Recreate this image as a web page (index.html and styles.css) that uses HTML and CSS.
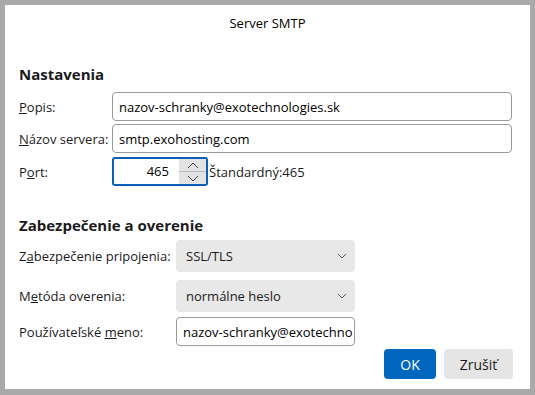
FILE: index.html
```html
<!DOCTYPE html>
<html lang="sk">
<head>
<meta charset="utf-8">
<title>Server SMTP</title>
<link rel="stylesheet" href="styles.css">
</head>
<body>
<div class="dialog">
  <div class="title">Server SMTP</div>

  <div class="heading h1">Nastavenia</div>
  <div class="grid1">
    <label class="lbl"><u>P</u>opis:</label>
    <div class="field">nazov-schranky@exotechnologies.sk</div>
    <label class="lbl"><u>N</u>ázov servera:</label>
    <div class="field">smtp.exohosting.com</div>
    <label class="lbl">P<u>o</u>rt:</label>
    <div class="portrow">
      <div class="port">
        <span class="portval">465</span>
        <div class="spin">
          <div class="spinbtn"><svg width="12" height="7" viewBox="0 0 12 7"><path d="M1 6 L6 1 L11 6" fill="none" stroke="#444" stroke-width="1"/></svg></div>
          <div class="spinbtn"><svg width="12" height="7" viewBox="0 0 12 7"><path d="M1 1 L6 6 L11 1" fill="none" stroke="#444" stroke-width="1"/></svg></div>
        </div>
      </div>
      <span class="std">Štandardný:465</span>
    </div>
  </div>

  <div class="heading h2">Zabezpečenie a overenie</div>
  <div class="grid2">
    <label class="lbl">Z<u>a</u>bezpečenie pripojenia:</label>
    <div class="select"><span>SSL/TLS</span><svg width="10" height="6" viewBox="0 0 10 6"><path d="M1 1 L5 5 L9 1" fill="none" stroke="#555" stroke-width="1"/></svg></div>
    <label class="lbl">M<u>e</u>tóda overenia:</label>
    <div class="select s2"><span>normálne heslo</span><svg width="10" height="6" viewBox="0 0 10 6"><path d="M1 1 L5 5 L9 1" fill="none" stroke="#555" stroke-width="1"/></svg></div>
    <label class="lbl">Používateľské <u>m</u>eno:</label>
    <div class="field user"><span class="clip">nazov-schranky@exotechno</span></div>
  </div>

  <div class="buttons">
    <div class="btn ok">OK</div>
    <div class="btn cancel">Zrušiť</div>
  </div>
</div>
</body>
</html>
```
FILE: styles.css
```css
html, body {
  margin: 0;
  padding: 0;
}
body {
  background: #a9a9a9;
  width: 535px;
  height: 395px;
  overflow: hidden;
  font-family: "Open Sans", "Noto Sans", sans-serif;
  font-size: 13px;
  color: #1b1b1b;
}
.dialog {
  margin: 5px;
  width: 525px;
  height: 384px;
  background: #fff;
  box-sizing: border-box;
  padding: 0 18px 0 14px;
  display: flex;
  flex-direction: column;
}
.title {
  margin-top: 9px;
  line-height: 18px;
  text-align: center;
  color: #000;
  padding-left: 4px;
}
.heading {
  font-weight: 700;
  font-size: 15px;
  line-height: 20px;
  color: #1b1b1b;
}
.h1 { margin-top: 32px; }
.h2 { margin-top: 29px; }
.grid1 {
  margin-top: 8px;
  display: grid;
  grid-template-columns: 93px 1fr;
  row-gap: 3px;
  align-items: center;
}
.grid1 .lbl:nth-of-type(3) { margin-top: 1px; }
.field {
  height: 29px;
  box-sizing: border-box;
  border: 1px solid #9a9a9a;
  border-radius: 4px;
  padding: 0 6px;
  display: flex;
  align-items: center;
  white-space: nowrap;
  overflow: hidden;
  color: #000;
}
.portrow {
  display: flex;
  align-items: center;
  margin-top: 1px;
}
.port {
  width: 96px;
  height: 29px;
  box-sizing: border-box;
  border: 2px solid #0a5fb8;
  border-radius: 3px;
  display: flex;
  align-items: stretch;
}
.portval {
  flex: 1;
  text-align: right;
  padding-right: 10px;
  line-height: 25px;
  color: #000;
}
.spin {
  width: 27px;
  display: flex;
  flex-direction: column;
}
.spinbtn {
  flex: 1;
  background: #e3e3e3;
  display: flex;
  align-items: center;
  justify-content: center;
}
.spinbtn + .spinbtn {
  border-top: 1px solid #b8b8b8;
}
.std {
  margin-left: 1px;
  color: #1b1b1b;
}
.grid2 {
  margin-top: 5px;
  display: grid;
  grid-template-columns: 157px 179px;
  align-items: center;
}
.select {
  height: 32px;
  box-sizing: border-box;
  background: #e8e8e8;
  border-radius: 4px;
  padding: 0 8px 0 10px;
  display: flex;
  align-items: center;
  justify-content: space-between;
  color: #1b1b1b;
}
.s2 { margin-top: 8px; }
.user {
  margin-top: 5px;
  height: 29px;
  padding-right: 0;
}
.clip {
  display: block;
  overflow: hidden;
  white-space: nowrap;
}
.grid2 .lbl:nth-of-type(2) { margin-top: 8px; }
.grid2 .lbl:nth-of-type(3) { margin-top: 5px; }
.buttons {
  margin-top: 3px;
  display: flex;
  justify-content: flex-end;
  gap: 8px;
  margin-right: -1px;
}
.btn {
  height: 30px;
  border-radius: 4px;
  display: flex;
  align-items: center;
  justify-content: center;
  font-size: 14px;
}
.ok {
  width: 52px;
  background: #0067c0;
  color: #fff;
}
.cancel {
  width: 69px;
  background: #e5e5e5;
  color: #1b1b1b;
}
```
